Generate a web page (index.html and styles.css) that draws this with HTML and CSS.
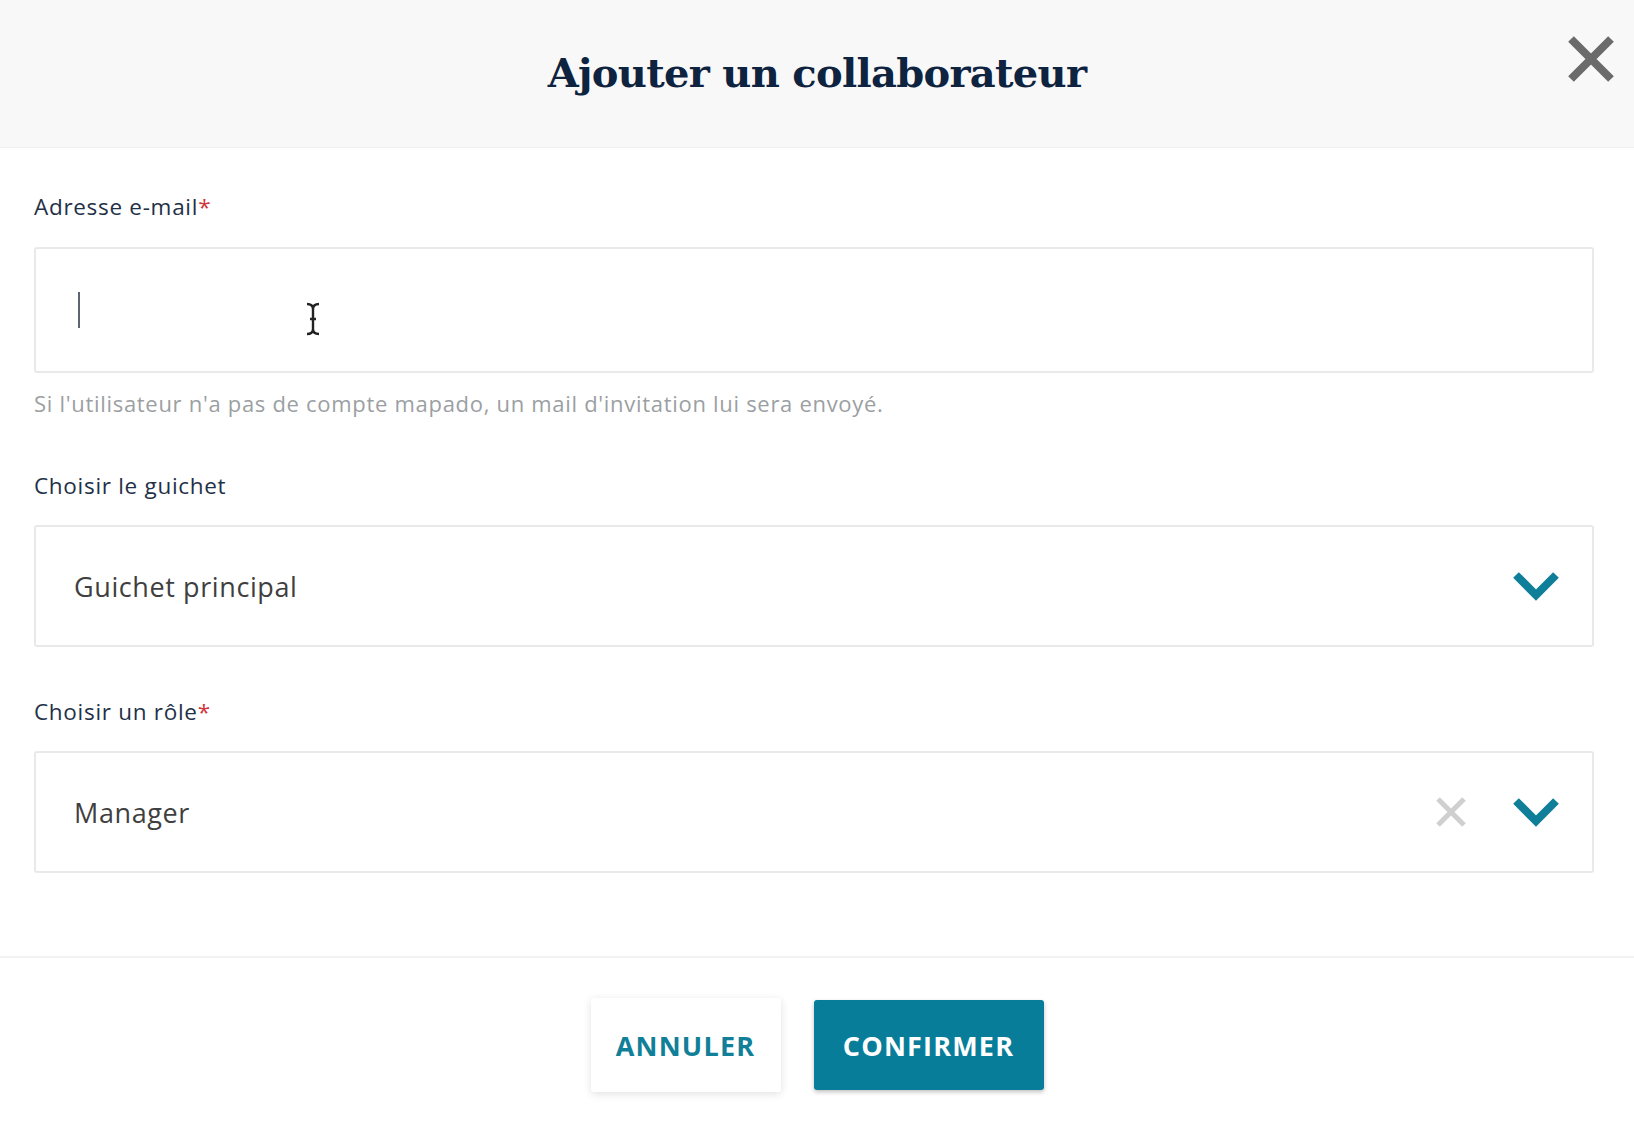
FILE: index.html
```html
<!DOCTYPE html>
<html lang="fr">
<head>
<meta charset="utf-8">
<title>Ajouter un collaborateur</title>
<link rel="stylesheet" href="styles.css">
</head>
<body>
<div class="modal">
  <header class="modal-header">
    <div class="spacer"></div>
    <h1 class="title">Ajouter un collaborateur</h1>
    <div class="close-wrap">
      <button class="close" aria-label="Fermer">
        <svg width="50" height="48" viewBox="0 0 50 48"><path d="M5 4 L45 44 M45 4 L5 44" stroke="#6b6b6b" stroke-width="8" stroke-linecap="butt"/></svg>
      </button>
    </div>
  </header>

  <main class="modal-body">
    <div class="field field-email">
      <label class="label">Adresse e-mail<span class="req">*</span></label>
      <div class="input input-email">
        <span class="caret"></span>
        <svg class="ibeam" width="16" height="34" viewBox="0 0 16 34"><path d="M2 2 Q8 2 8 7 Q8 2 14 2 M8 7 V27 M2 32 Q8 32 8 27 Q8 32 14 32 M5 17 H11" stroke="#222" stroke-width="2.4" fill="none"/></svg>
      </div>
      <p class="help">Si l'utilisateur n'a pas de compte mapado, un mail d'invitation lui sera envoyé.</p>
    </div>

    <div class="field field-guichet">
      <label class="label">Choisir le guichet</label>
      <div class="input select">
        <span class="value">Guichet principal</span>
        <svg class="chev" width="48" height="32" viewBox="0 0 48 32"><path d="M4 5 L24 25 L44 5" stroke="#0f7e99" stroke-width="8" fill="none"/></svg>
      </div>
    </div>

    <div class="field field-role">
      <label class="label">Choisir un rôle<span class="req">*</span></label>
      <div class="input select">
        <span class="value">Manager</span>
        <svg class="clear" width="32" height="32" viewBox="0 0 32 32"><path d="M3 3 L29 29 M29 3 L3 29" stroke="#cfcfcf" stroke-width="5"/></svg>
        <svg class="chev" width="48" height="32" viewBox="0 0 48 32"><path d="M4 5 L24 25 L44 5" stroke="#0f7e99" stroke-width="8" fill="none"/></svg>
      </div>
    </div>
  </main>

  <footer class="modal-footer">
    <button class="btn btn-cancel">ANNULER</button>
    <button class="btn btn-confirm">CONFIRMER</button>
  </footer>
</div>
</body>
</html>
```
FILE: styles.css
```css
* { box-sizing: border-box; }
html, body { margin: 0; padding: 0; }
body {
  background: #ffffff;
  font-family: "Open Sans", "Noto Sans", sans-serif;
  color: #1d2d44;
  width: 1634px;
  height: 1132px;
  overflow: hidden;
}
.modal { display: flex; flex-direction: column; height: 1132px; }

.modal-header {
  height: 148px;
  background: #f8f8f8;
  display: grid;
  grid-template-columns: 1fr auto 1fr;
  align-items: center;
  border-bottom: 1px solid #f0f0f0;
}
.title {
  margin: 0;
  font-family: "DejaVu Serif", "Liberation Serif", serif;
  font-weight: bold;
  font-size: 40px;
  letter-spacing: -0.7px;
  color: #0e2340;
  padding-bottom: 2px;
}
.close-wrap { display: flex; justify-content: flex-end; align-self: start; padding-top: 35px; padding-right: 18px; }
.close { border: 0; background: none; padding: 0; display: block; cursor: pointer; }
.close svg { display: block; }

.modal-body {
  padding: 45px 40px 0 34px;
  flex: 0 0 auto;
  height: 808px;
}
.field { display: flex; flex-direction: column; }
.label {
  font-size: 22.5px;
  line-height: 28px;
  color: #1f3148;
  font-weight: 500;
  letter-spacing: 0.7px;
}
.req { color: #d0343c; }

.input {
  margin-top: 26px;
  border: 2px solid #e9e9e9;
  border-radius: 3px;
  background: #fff;
  display: flex;
  align-items: center;
}
.input-email { height: 126px; padding-left: 42px; gap: 0; }
.caret { width: 2px; height: 36px; background: #5c6670; margin-top: 0; }
.ibeam { margin-left: 225px; margin-top: 18px; }

.help {
  margin: 16px 0 0;
  font-size: 22px;
  line-height: 28px;
  color: #9b9fa3;
  letter-spacing: 0.7px;
}
.field-guichet { margin-top: 55px; }
.field-role { margin-top: 51px; }
.select { height: 122px; margin-top: 25px; padding: 0 32px 0 38px; }
.value { flex: 1; font-size: 27px; color: #3f3f3f; letter-spacing: 0.6px; }
.clear { margin-right: 45px; }
.chev { display: block; }

.modal-footer {
  border-top: 2px solid #f3f3f3;
  flex: 1;
  display: flex;
  justify-content: center;
  align-items: flex-start;
  gap: 33px;
  padding-top: 40px;
}
.btn {
  font-family: "Open Sans", "Noto Sans", sans-serif;
  font-weight: 700;
  font-size: 27px;
  letter-spacing: 1.2px;
  border-radius: 3px;
  cursor: pointer;
  padding: 0;
}
.btn-cancel {
  width: 190px;
  height: 94px;
  background: #fff;
  color: #127f99;
  border: 0;
  box-shadow: 0 2px 8px rgba(0,0,0,0.12);
}
.btn-confirm {
  width: 230px;
  height: 90px;
  margin-top: 2px;
  background: #087d9a;
  color: #fff;
  border: 0;
  box-shadow: 0 2px 4px rgba(0,0,0,0.25);
}
```
